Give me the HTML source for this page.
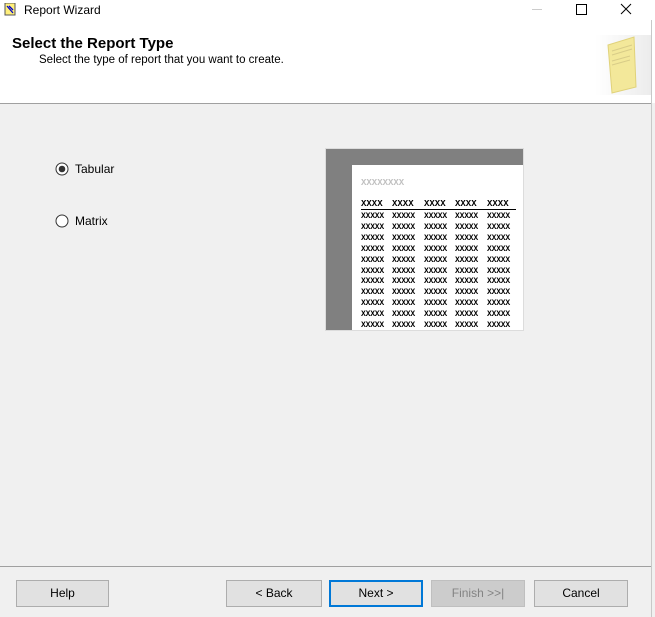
<!DOCTYPE html>
<html><head><style>
body{margin:0;width:655px;height:617px;background:#f0f0f0;position:relative;overflow:hidden;font-family:"Liberation Sans",sans-serif;font-size:12px;color:#000}
.abs{position:absolute}
.btn{position:absolute;top:580px;height:27px;width:93px;background:#e1e1e1;border:1px solid #adadad;box-sizing:border-box;text-align:center;line-height:25px;font-size:12px}
.x{position:absolute;font-family:"Liberation Mono",monospace;font-size:8px;font-weight:bold;letter-spacing:-0.2px;line-height:8px}
</style></head><body>
<div class="abs" style="left:0;top:0;width:655px;height:103px;background:#fff"></div>
<div class="abs" style="left:0;top:103px;width:651px;height:1px;background:#a0a0a0"></div>
<div class="abs" style="left:651px;top:20px;width:1px;height:597px;background:#c8c8c8"></div>
<svg class="abs" style="left:4px;top:3px" width="13" height="13"><rect x="1" y="0" width="10" height="12" fill="#ffef7a" stroke="#555"/><path d="M3 3l6 7M5 3l4 4" stroke="#00c" stroke-width="1.3"/></svg>
<div class="abs" style="left:24px;top:3px;font-size:12px">Report Wizard</div>
<div class="abs" style="left:532px;top:9px;width:10px;height:1px;background:#ccc"></div>
<div class="abs" style="left:576px;top:4px;width:9px;height:9px;border:1px solid #000"></div>
<svg class="abs" style="left:620px;top:3px" width="12" height="12"><path d="M1 1L11 11M11 1L1 11" stroke="#000" stroke-width="1"/></svg>
<div class="abs" style="left:12px;top:35px;font-size:15px;font-weight:bold">Select the Report Type</div>
<div class="abs" style="left:39px;top:54px;font-size:11.5px">Select the type of report that you want to create.</div>
<div class="abs" style="left:595px;top:35px;width:56px;height:60px;background:linear-gradient(90deg,#fff,#ececec)"></div>
<svg class="abs" style="left:596px;top:35px" width="55" height="60"><path d="M12 10L38 2L40 52L16 58Z" fill="#f3e89a" stroke="#e0d27a"/><path d="M16 16L36 10M16 20L36 14M16 26L34 21M16 30L34 25" stroke="#d8cc88"/></svg>
<svg class="abs" style="left:55px;top:162px" width="14" height="14"><circle cx="7" cy="7" r="6" fill="#fff" stroke="#333"/><circle cx="7" cy="7" r="3.3" fill="#333"/></svg>
<div class="abs" style="left:75px;top:162px">Tabular</div>
<svg class="abs" style="left:55px;top:214px" width="14" height="14"><circle cx="7" cy="7" r="6" fill="#fff" stroke="#333"/></svg>
<div class="abs" style="left:75px;top:214px">Matrix</div>
<div class="abs" style="left:325px;top:148px;width:199px;height:183px;background:#808080;border:1px solid #dcdcdc;box-sizing:border-box"></div>
<div class="abs" style="left:352px;top:165px;width:171px;height:165px;background:#fff"></div>
<div class="x" style="left:361px;top:179px;color:#c0c0c0;font-size:9px;letter-spacing:0">XXXXXXXX</div>
<div class="abs" style="left:361px;top:209px;width:155px;height:1px;background:#000"></div>
<div id="g"></div>
<script>
var cols=[361,392,424,455,487],h='';
cols.forEach(function(c){h+='<div class="x" style="left:'+c+'px;top:200px;font-size:9px;letter-spacing:0;font-weight:900">XXXX</div>';
for(var r=0;r<11;r++)h+='<div class="x" style="left:'+c+'px;top:'+(213+r*10.9)+'px">XXXXX</div>';});
document.getElementById('g').innerHTML=h;
</script>
<div class="abs" style="left:0;top:566px;width:651px;height:1px;background:#a0a0a0"></div>
<div class="btn" style="left:16px">Help</div>
<div class="btn" style="left:226px;width:96px">&lt; Back</div>
<div class="btn" style="left:329px;width:94px;border:2px solid #0078d7;line-height:23px">Next &gt;</div>
<div class="btn" style="left:431px;width:94px;background:#cccccc;border-color:#bfbfbf;color:#838383">Finish &gt;&gt;|</div>
<div class="btn" style="left:534px;width:94px">Cancel</div>
</body></html>
